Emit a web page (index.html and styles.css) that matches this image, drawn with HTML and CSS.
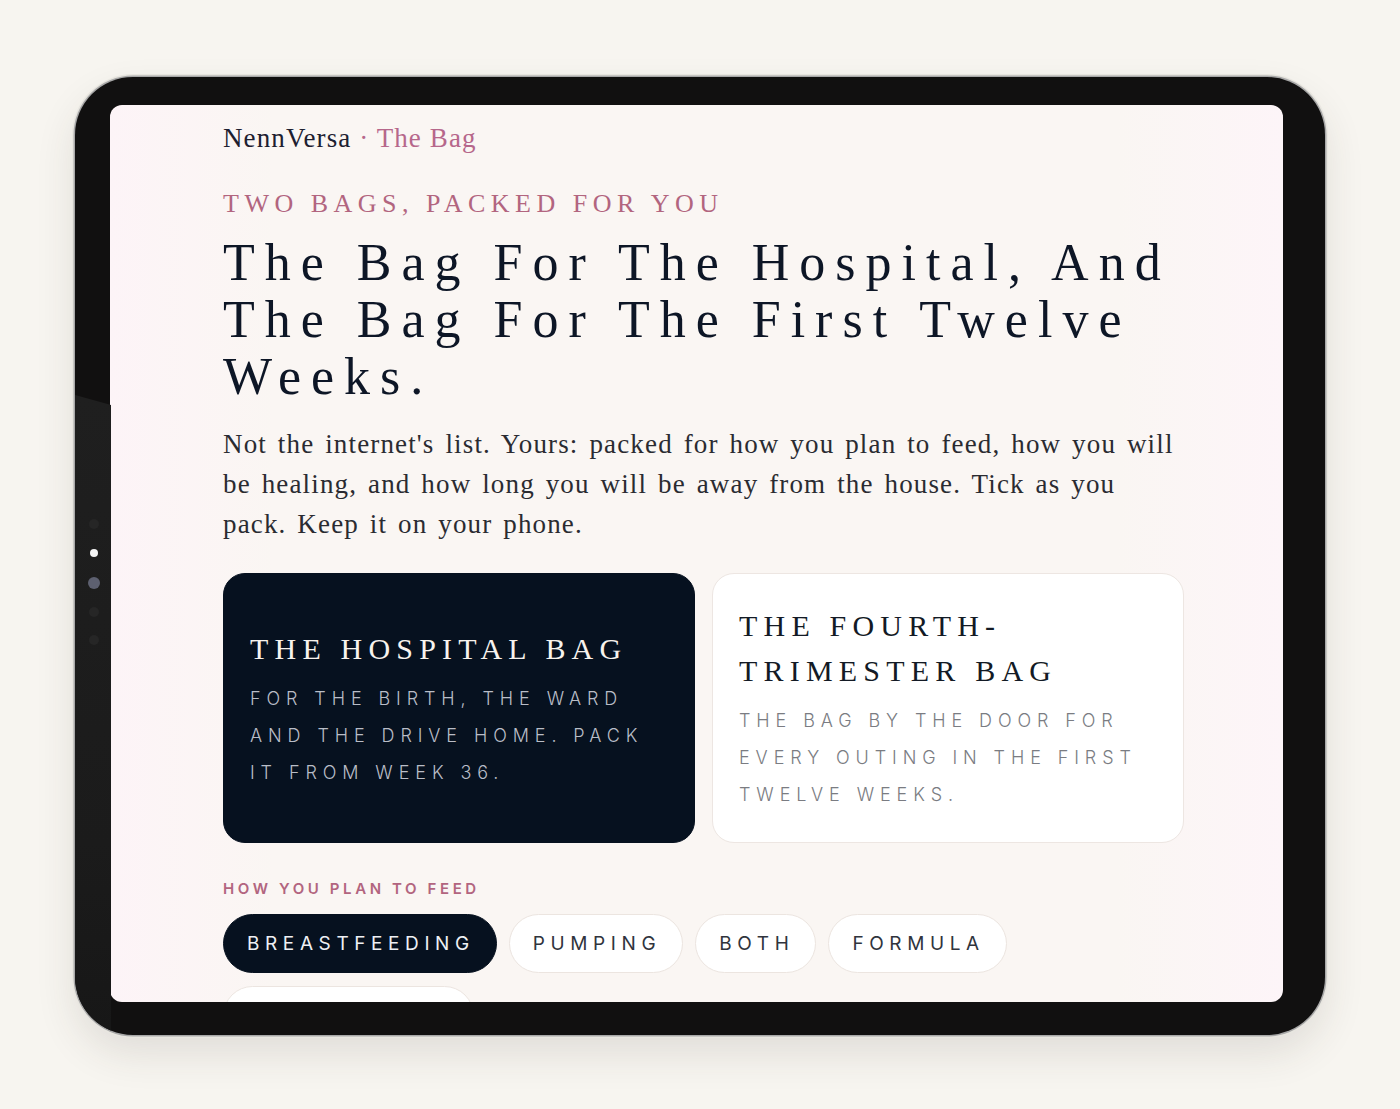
FILE: index.html
```html
<!DOCTYPE html>
<html lang="en">
<head>
<meta charset="utf-8">
<title>NennVersa · The Bag</title>
<link rel="stylesheet" href="styles.css">
</head>
<body>
<div class="tablet">
  <span class="glare"></span>
  <span class="dot dot-1"></span>
  <span class="dot dot-2"></span>
  <span class="dot dot-3"></span>
  <span class="dot dot-4"></span>
  <span class="dot dot-5"></span>
  <div class="screen">
    <main class="content">
      <div class="crumb"><span class="brand">NennVersa</span> <span class="crumb-sub">· The Bag</span></div>
      <p class="eyebrow">TWO BAGS, PACKED FOR YOU</p>
      <h1 class="title">The Bag For The Hospital, And The Bag For The First Twelve Weeks.</h1>
      <p class="lead">Not the internet's list. Yours: packed for how you plan to feed, how you will be healing, and how long you will be away from the house. Tick as you pack. Keep it on your phone.</p>
      <div class="cards">
        <div class="card card-dark">
          <h2 class="card-title">THE HOSPITAL BAG</h2>
          <p class="card-text">FOR THE BIRTH, THE WARD AND THE DRIVE HOME. PACK IT FROM WEEK 36.</p>
        </div>
        <div class="card card-light">
          <h2 class="card-title">THE FOURTH-TRIMESTER BAG</h2>
          <p class="card-text">THE BAG BY THE DOOR FOR EVERY OUTING IN THE FIRST TWELVE WEEKS.</p>
        </div>
      </div>
      <p class="label">HOW YOU PLAN TO FEED</p>
      <div class="pills">
        <button class="pill pill-active">BREASTFEEDING</button>
        <button class="pill">PUMPING</button>
        <button class="pill">BOTH</button>
        <button class="pill">FORMULA</button>
        <button class="pill">NOT SURE YET</button>
      </div>
    </main>
  </div>
</div>
</body>
</html>
```

FILE: styles.css
```css
* { box-sizing: border-box; }

html, body {
  margin: 0;
  padding: 0;
}

body {
  background: #f7f5f0;
  min-height: 1109px;
  display: flex;
  align-items: flex-start;
  justify-content: center;
  padding-top: 77px;
  font-family: "Liberation Serif", serif;
}

.tablet {
  position: relative;
  width: 1250px;
  height: 958px;
  padding: 28px 42px 33px 35px;
  background: #111010;
  border-radius: 58px;
  overflow: hidden;
  box-shadow: 0 0 0 1.5px #a8a8a8, 0 0 0 3px #e8e6e0, 0 18px 40px rgba(60, 50, 40, 0.12);
}

.glare {
  position: absolute;
  left: 0;
  top: 318px;
  width: 36px;
  bottom: 0;
  background: linear-gradient(180deg, #1f1f1f 0%, #1b1b1b 70%, #171717 100%);
  clip-path: polygon(0 0, 100% 10px, 100% 100%, 0 100%);
}

.dot {
  position: absolute;
  left: 19px;
  width: 10px;
  height: 10px;
  margin-left: -5px;
  border-radius: 50%;
  background: #262626;
}
.dot-1 { top: 442px; }
.dot-2 { top: 472px; width: 8px; height: 8px; margin-left: -4px; background: #f4f4f4; }
.dot-3 { top: 500px; width: 12px; height: 12px; margin-left: -6px; background: #5d6070; }
.dot-4 { top: 530px; }
.dot-5 { top: 558px; }

.screen {
  width: 100%;
  height: 100%;
  border-radius: 12px;
  overflow: hidden;
  background: linear-gradient(90deg, #fdf4f7 0%, #faf6f3 14%, #faf6f3 86%, #fdf5f8 100%);
}

.content {
  width: 1074px;
  padding: 16px 0 0 113px;
}

.crumb {
  font-size: 27px;
  line-height: 35px;
  letter-spacing: 1.1px;
  color: #1d2030;
}
.crumb-sub { color: #b6678b; }

.eyebrow {
  margin: 31px 0 0;
  font-size: 26px;
  line-height: 34px;
  letter-spacing: 5.5px;
  color: #b2657f;
}

.title {
  margin: 13px 0 0;
  font-size: 52px;
  line-height: 57px;
  font-weight: 400;
  letter-spacing: 10px;
  color: #0d1626;
}

.lead {
  margin: 19px 0 0;
  font-size: 27px;
  line-height: 40px;
  letter-spacing: 1.15px;
  word-spacing: 3px;
  color: #2a2b31;
}

.cards {
  margin-top: 29px;
  display: grid;
  grid-template-columns: 472px 472px;
  gap: 17px;
}

.card {
  border-radius: 22px;
  padding: 29px 20px 29px 26px;
  display: flex;
  flex-direction: column;
  justify-content: center;
}

.card-dark {
  background: #06111f;
  border: 1px solid #06111f;
}

.card-light {
  background: #ffffff;
  border: 1px solid #ede6e2;
  padding-left: 26px;
}

.card-title {
  margin: 0;
  font-size: 30px;
  line-height: 45px;
  font-weight: 400;
  letter-spacing: 6.2px;
}
.card-dark .card-title { color: #f7f3ee; }
.card-light .card-title { color: #131a25; }

.card-text {
  margin: 9px 0 0;
  font-family: "Inter", "Liberation Sans", sans-serif;
  font-weight: 300;
  font-size: 18px;
  line-height: 37px;
  letter-spacing: 5.9px;
}
.card-dark .card-text { color: #b9bdc7; }
.card-light .card-text { color: #7a7c82; }

.label {
  margin: 36px 0 0;
  font-family: "Inter", "Liberation Sans", sans-serif;
  font-weight: 600;
  font-size: 15px;
  line-height: 20px;
  letter-spacing: 3.6px;
  color: #b2657f;
}

.pills {
  margin-top: 15px;
  display: flex;
  flex-wrap: wrap;
  gap: 13px 12px;
}

.pill {
  height: 59px;
  padding: 0 21px 0 23px;
  border-radius: 30px;
  border: 1.5px solid #ece5e0;
  background: #ffffff;
  font-family: "Inter", "Liberation Sans", sans-serif;
  font-weight: 400;
  font-size: 19px;
  letter-spacing: 5.6px;
  color: #30343d;
  cursor: pointer;
}

.pill-active {
  background: #06111f;
  border-color: #06111f;
  color: #eef0f4;
}
```
